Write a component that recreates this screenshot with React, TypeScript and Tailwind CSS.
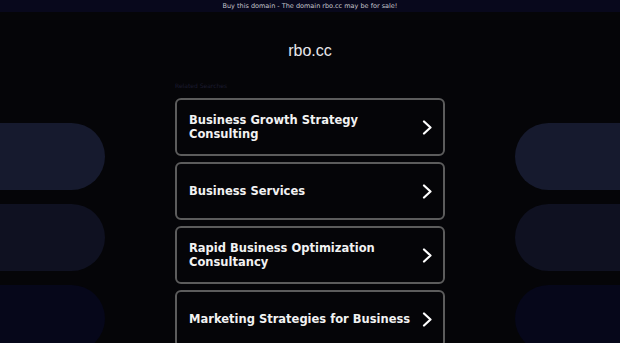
import { FC } from "react"

const searches = [
  "Business Growth Strategy Consulting",
  "Business Services",
  "Rapid Business Optimization Consultancy",
  "Marketing Strategies for Business",
]

const pillColors = ["bg-[#161a2e]", "bg-[#0f1121]", "bg-[#06071a]"]

const Chevron: FC = () => (
  <svg width="11" height="15" viewBox="0 0 11 15" fill="none" className="shrink-0">
    <polyline
      points="2,1.5 8.5,7.5 2,13.5"
      stroke="white"
      strokeWidth="2.2"
      strokeLinecap="round"
      strokeLinejoin="round"
    />
  </svg>
)

const SideColumn: FC<{ side: "left" | "right" }> = ({ side }) => (
  <div className="w-[105px] shrink-0 pt-[111px] flex flex-col gap-[14px]">
    {pillColors.map((c) => (
      <div
        key={c}
        className={`h-[67px] ${c} ${side === "left" ? "rounded-r-full" : "rounded-l-full"}`}
      />
    ))}
  </div>
)

export default function App() {
  return (
    <div className="min-h-screen bg-[#050508] overflow-hidden">
      <div className="h-[12px] bg-[#08081c] flex items-center justify-center">
        <span className="text-[6.5px] leading-none text-[#c4c4cc] font-['DejaVu_Sans',sans-serif]">
          Buy this domain - The domain rbo.cc may be for sale!
        </span>
      </div>
      <div className="flex justify-between">
        <SideColumn side="left" />
        <div className="w-[270px] shrink-0 flex flex-col pt-[29px]">
          <h1 className="text-center text-[16px] leading-[20px] text-[#e8e8ec] font-['Liberation_Sans',Arial,sans-serif]">
            rbo.cc
          </h1>
          <div className="mt-[21px] text-[6px] leading-[8px] text-[#1c1c30] font-['DejaVu_Sans',sans-serif]">
            Related Searches
          </div>
          <div className="mt-[8px] flex flex-col gap-[6px]">
            {searches.map((s) => (
              <div
                key={s}
                className="h-[58px] border-2 border-[#5c5c5c] rounded-md pl-3 pr-[10px] flex items-center justify-between gap-1"
              >
                <span className="text-[11.5px] leading-[14px] font-bold text-[#f2f2f2] font-['DejaVu_Sans',sans-serif]">
                  {s}
                </span>
                <Chevron />
              </div>
            ))}
          </div>
        </div>
        <SideColumn side="right" />
      </div>
    </div>
  )
}
